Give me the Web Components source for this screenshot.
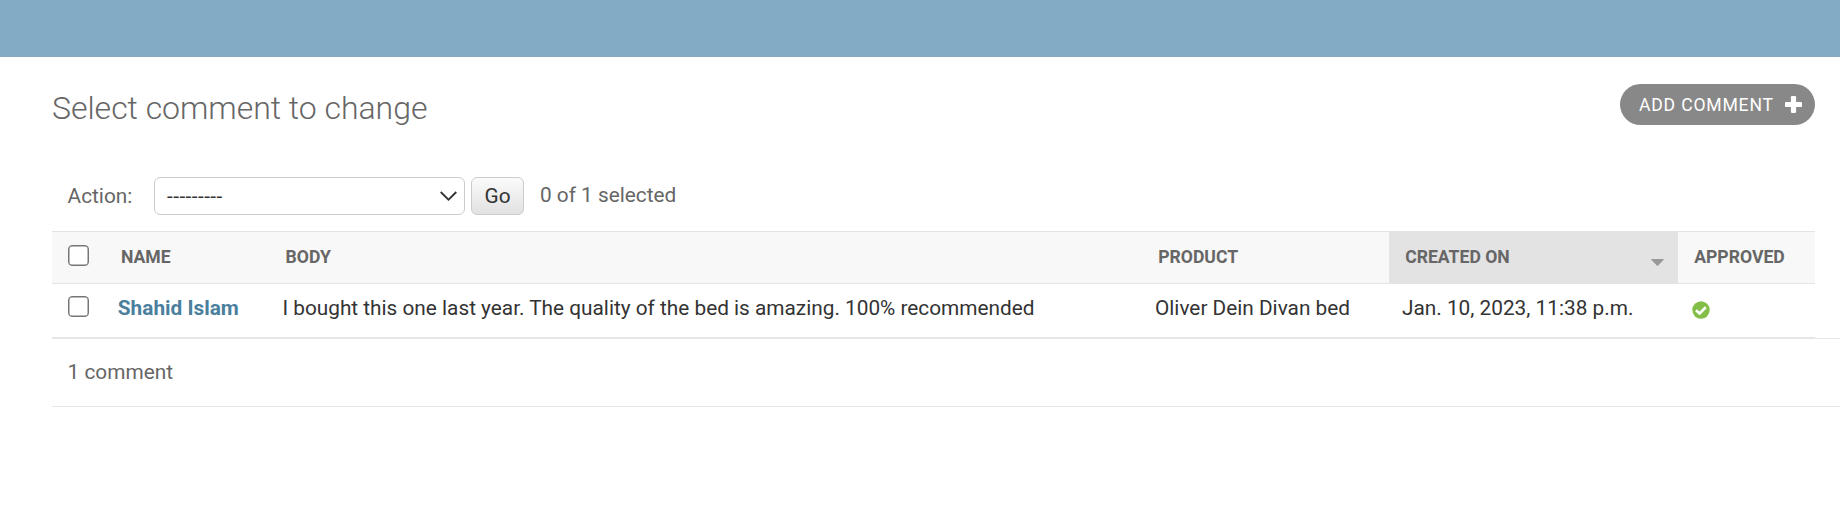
<!DOCTYPE html>
<html lang="en">
<head>
<meta charset="utf-8">
<title>Select comment to change</title>
<style>
body { margin: 0; background: #fff; font-family: Roboto, "Liberation Sans", sans-serif; font-size: 20.8px; color: #333; overflow: hidden; }
</style>
</head>
<body>
<change-list></change-list>
<script>
const define = (name, html) => customElements.define(name, class extends HTMLElement {
  constructor() {
    super();
    const t = document.createElement('template');
    t.innerHTML = html;
    this.attachShadow({ mode: 'open' }).append(t.content.cloneNode(true));
  }
});

define('check-box', `
<style>
:host { display: block; box-sizing: border-box; width: 21px; height: 21px; border: 1px solid #767676; border-radius: 4px; background: #fff; box-shadow: inset 0 0 0 .5px #767676; }
</style>`);

define('add-button', `
<style>
:host { display: flex; box-sizing: border-box; width: 195px; height: 41px; padding: 0 13px 0 19px; border-radius: 20.5px; background: #888; color: #fff; align-items: center; justify-content: space-between; font-size: 17.6px; letter-spacing: .8px; line-height: 40px; white-space: nowrap; }
svg { width: 17px; height: 17px; display: block; margin-top: -1px; }
</style>
<span><slot></slot></span>
<svg viewBox="0 0 17 17" fill="#fff"><rect x="5.9" y="0" width="5.2" height="17" rx="1.2"/><rect x="0" y="5.9" width="17" height="5.2" rx="1.2"/></svg>`);

define('action-bar', `
<style>
:host { display: flex; height: 38px; padding-left: 15.600px; color: #666; line-height: 39px; white-space: nowrap; }
label { width: 86.400px; }
.select { box-sizing: border-box; width: 311px; height: 38px; border: 1px solid #ccc; border-radius: 6px; display: flex; align-items: center; justify-content: space-between; padding: 0 7px 0 12px; color: #333; line-height: 36px; }
.value { letter-spacing: .45px; }
.select svg { width: 17px; height: 10px; display: block; }
.go { box-sizing: border-box; width: 53px; height: 38px; margin-left: 6px; border: 1px solid #ccc; border-radius: 6px; background: linear-gradient(#fbfbfb, #e1e1e1); color: #333; text-align: center; line-height: 37px; }
.count { margin-left: 16px; line-height: 37px; }
</style>
<label><slot name="label"></slot></label>
<div class="select"><span class="value"><slot name="value"></slot></span>
<svg viewBox="0 0 17 10" fill="none" stroke="#333" stroke-width="1.8"><path d="M.7 1 8.5 8.7 16.3 1"/></svg></div>
<div class="go"><slot name="go"></slot></div>
<div class="count"><slot name="count"></slot></div>`);

define('result-row', `
<style>
:host { display: grid; grid-template-columns: 52.8px 164.6px 872.6px 247px 289px 137px; box-sizing: border-box; width: 1763px; white-space: nowrap; }
:host([head]) { height: 53px; border-top: 1px solid #e4e4e4; border-bottom: 1px solid #e4e4e4; background: #f8f8f8; color: #666; font-size: 17.6px; font-weight: 700; }
:host(:not([head])) { height: 54px; border-bottom: 1px solid #e6e6e6; }
</style>
<slot></slot>`);

define('result-cell', `
<style>
:host { display: block; padding-left: 13px; line-height: 48px; }
:host([head]) { padding-left: 16.200px; line-height: 51px; }
:host([box]) { padding: 12px 0 0 16px; }
:host([head][box]) { padding: 13px 0 0 16px; }
:host([link]) { color: #4a7f9d; font-weight: 700; }
:host([sorted]) { background: #e3e3e3; display: flex; justify-content: space-between; padding-right: 13.500px; }
.arrow { display: none; width: 13px; height: 7px; margin-top: 27px; }
:host([sorted]) .arrow { display: block; }
</style>
<span><slot></slot></span><svg class="arrow" viewBox="0 0 13 7" fill="#999"><path d="M.8 0H12.2Q13 .2 12.5 1L7.2 6.6Q6.5 7.2 5.8 6.6L.5 1Q0 .2.8 0Z"/></svg>`);

define('yes-icon', `
<style>
:host { display: block; width: 18px; height: 18px; margin: 17px 0 0 1.1px; }
svg { display: block; width: 18px; height: 18px; }
</style>
<svg viewBox="0 0 18 18"><circle cx="9" cy="9" r="8.7" fill="#83bf46"/><path d="M4 9.2 7.6 12.4 13.8 6.2" fill="none" stroke="#fff" stroke-width="2.7"/></svg>`);

define('change-list', `
<style>
:host { display: block; height: 508px; }
.bar { height: 57px; background: #84abc5; }
main { padding-left: 52px; }
.top { display: flex; justify-content: space-between; padding: 27px 25px 0 0; height: 93px; box-sizing: border-box; }
h1 { margin: 0; font-size: 32px; font-weight: 300; line-height: 48px; letter-spacing: -.03px; color: #666; white-space: nowrap; }
.actions { padding: 27px 0 16px; }
.pager { box-sizing: border-box; height: 69px; border-top: 1px solid #e6e6e6; border-bottom: 1px solid #e6e6e6; padding-left: 15.6px; color: #666; line-height: 66px; }
</style>
<div class="bar"></div>
<main>
<div class="top"><h1>Select comment to change</h1><add-button>ADD COMMENT</add-button></div>
<div class="actions"><action-bar><span slot="label">Action:</span><span slot="value">---------</span><span slot="go">Go</span><span slot="count">0 of 1 selected</span></action-bar></div>
<result-row head>
<result-cell head box><check-box></check-box></result-cell><result-cell head>NAME</result-cell><result-cell head>BODY</result-cell><result-cell head>PRODUCT</result-cell><result-cell head sorted>CREATED ON</result-cell><result-cell head>APPROVED</result-cell>
</result-row>
<result-row>
<result-cell box><check-box></check-box></result-cell><result-cell link>Shahid Islam</result-cell><result-cell>I bought this one last year. The quality of the bed is amazing. 100% recommended</result-cell><result-cell>Oliver Dein Divan bed</result-cell><result-cell>Jan. 10, 2023, 11:38 p.m.</result-cell><result-cell><yes-icon></yes-icon></result-cell>
</result-row>
<div class="pager">1 comment</div>
</main>`);
</script>
</body>
</html>
